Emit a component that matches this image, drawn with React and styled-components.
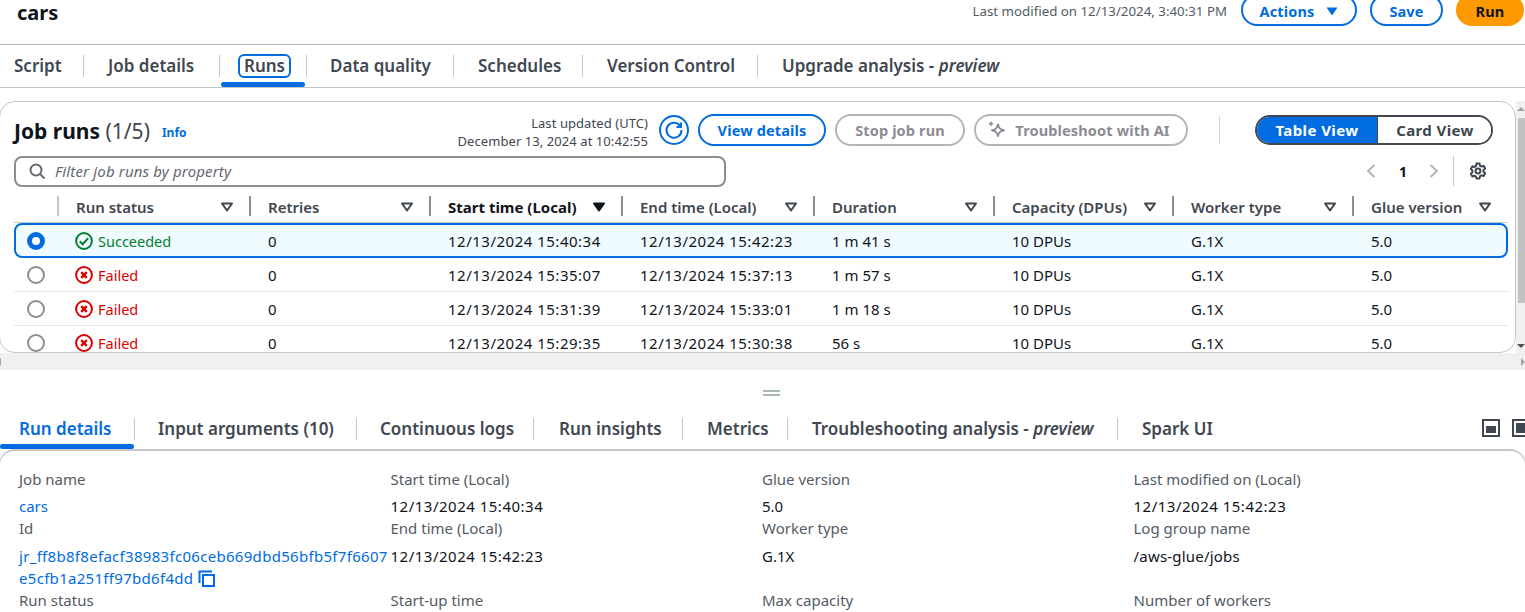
import React from 'react'
import styled, { createGlobalStyle } from 'styled-components'

const GlobalStyle = createGlobalStyle`
  html, body {
    margin: 0;
    padding: 0;
    height: 612px;
    overflow: hidden;
    background: #fff;
    font-family: "Noto Sans", "Open Sans", sans-serif;
    font-size: 14px;
    color: #0f141a;
  }
`

const BLUE = '#006ce0'
const GRID = '43px 192px 180px 192px 192px 180px 179px 180px 155px'

const Page = styled.div`
  margin-top: -6px;
  width: 1525px;
`

const Header = styled.header`
  height: 51px;
  box-sizing: border-box;
  border-bottom: 1px solid #a9b8b8;
  display: flex;
  align-items: flex-start;
  padding: 0 1px 0 17px;
`
const Title = styled.h1`
  margin: 5px 0 0;
  font-size: 20px;
  line-height: 28px;
  font-weight: 700;
  color: #0f141a;
  flex: 1;
`
const Modified = styled.span`
  font-size: 13.3px;
  line-height: 32px;
  margin-top: 1px;
  color: #545b64;
  margin-right: 14px;
`
const Button = styled.button`
  height: 32px;
  box-sizing: border-box;
  border-radius: 16px;
  border: 2px solid ${p => (p.$disabled ? '#b4b4bb' : p.$primary ? '#ff9900' : BLUE)};
  background: ${p => (p.$primary ? '#ff9900' : '#fff')};
  color: ${p => (p.$disabled ? '#8c8c94' : p.$primary ? '#0f141a' : BLUE)};
  font: 700 14.5px "Noto Sans", sans-serif;
  letter-spacing: 0.15px;
  padding: 0 ${p => p.$pr || 0}px 0 0;
  width: ${p => p.$w}px;
  margin-left: ${p => p.$ml || 0}px;
  display: inline-flex;
  align-items: center;
  justify-content: center;
  gap: ${p => p.$gap || 0}px;
  flex: none;
`
const HeaderButton = styled(Button)`
  padding-top: 2px;
`

const Tabs = styled.nav`
  height: 43px;
  box-sizing: border-box;
  display: flex;
  align-items: flex-start;
  border-bottom: 1px solid #c6c6cd;
`
const Tab = styled.div`
  position: relative;
  width: ${p => p.$w}px;
  height: 100%;
  box-sizing: border-box;
  padding: 8px 0 0 ${p => p.$pl}px;
  font-size: 17px;
  line-height: 26px;
  font-weight: 600;
  color: ${p => (p.$active ? BLUE : '#414750')};
  white-space: nowrap;
  flex: none;
  &:not(:last-of-type)::after {
    content: '';
    position: absolute;
    right: 0;
    top: 10px;
    height: 22px;
    width: 1px;
    background: #c6c6cd;
  }
  em { font-style: italic; }
`
const TabUnderline = styled.span`
  position: absolute;
  left: ${p => (p.$flush ? 0 : 1)}px;
  right: ${p => (p.$flush ? 1 : 2)}px;
  bottom: 0;
  height: 5px;
  border-radius: 3px;
  background: ${BLUE};
`
const FocusRing = styled.span`
  display: inline-block;
  border: 2px solid ${BLUE};
  border-radius: 6px;
  padding: 0 4px;
  margin-left: -6px;
  line-height: 20px;
`

const TablePanelRow = styled.div`
  display: flex;
  margin-top: 13px;
  height: 252px;
`
const Panel = styled.section`
  width: 1517px;
  margin-left: -1px;
  height: 252px;
  box-sizing: border-box;
  border: 1px solid #c6c6cd;
  border-radius: 16px;
  overflow: hidden;
  flex: none;
`
const VScroll = styled.div`
  position: relative;
  width: 9px;
  display: flex;
  flex-direction: column;
  background: #f0f0f0;
  i {
    display: block;
    height: 17px;
  }
  b {
    display: block;
    flex: 1;
    margin: 0 0 50px 2px;
    background: #c2c2c2;
  }
  &::before, &::after {
    content: '';
    position: absolute;
    right: 0;
    border-left: 4px solid transparent;
    border-right: 4px solid transparent;
  }
  &::before {
    top: 6px;
    border-bottom: 4px solid #a3a3a3;
  }
  &::after {
    bottom: 5px;
    border-top: 4px solid #505050;
  }
`
const HScroll = styled.div`
  position: relative;
  height: 17px;
  background: #f0f0f0;
  &::before, &::after {
    content: '';
    position: absolute;
    top: 5px;
    border-top: 4px solid transparent;
    border-bottom: 4px solid transparent;
  }
  &::before {
    left: -3px;
    border-right: 4px solid #a3a3a3;
  }
  &::after {
    right: 0;
    border-left: 4px solid #a3a3a3;
  }
`

const Toolbar = styled.div`
  display: flex;
  align-items: flex-start;
  padding: 12px 0 0 14px;
  height: 41px;
`
const Heading = styled.h2`
  margin: 3px 0 0;
  font-size: 21px;
  line-height: 28px;
  font-weight: 700;
  white-space: nowrap;
  span { font-weight: 400; color: #414750; }
`
const InfoLink = styled.a`
  font-size: 12px;
  font-weight: 700;
  color: ${BLUE};
  margin: 10px 0 0 12px;
`
const Updated = styled.div`
  margin-left: auto;
  text-align: right;
  font-size: 13px;
  letter-spacing: 0.07px;
  line-height: 18px;
  color: #414750;
  white-space: nowrap;
  margin-right: 11px;
`
const RoundIcon = styled.div`
  width: 30px;
  height: 30px;
  box-sizing: border-box;
  border: 2px solid ${BLUE};
  border-radius: 50%;
  display: flex;
  align-items: center;
  justify-content: center;
  margin-right: 9px;
  margin-top: 1px;
`
const ToolbarDivider = styled.div`
  width: 1px;
  height: 28px;
  background: #d5d5da;
  margin: 2px 35px 0 31px;
`
const Segmented = styled.div`
  display: flex;
  width: 238px;
  height: 30px;
  box-sizing: border-box;
  border: 2px solid #414750;
  border-radius: 15px;
  overflow: hidden;
  margin-right: 22px;
  margin-top: 1px;
`
const Segment = styled.div`
  flex: ${p => p.$w}px 0 0;
  display: flex;
  align-items: center;
  justify-content: center;
  font-weight: 700;
  font-size: 15px;
  letter-spacing: 0.4px;
  background: ${p => (p.$active ? BLUE : '#fff')};
  color: ${p => (p.$active ? '#fff' : '#414750')};
  border-right: ${p => (p.$active ? '1px solid #414750' : 'none')};
`

const FilterRow = styled.div`
  display: flex;
  align-items: center;
  height: 32px;
  padding-left: 14px;
`
const Filter = styled.div`
  width: 712px;
  height: 31px;
  box-sizing: border-box;
  border: 2px solid #8c8c94;
  border-radius: 8px;
  display: flex;
  align-items: center;
  gap: 9px;
  padding-left: 12px;
  font-style: italic;
  font-size: 15px;
  letter-spacing: 0.15px;
  color: #656871;
`
const Pager = styled.div`
  margin-left: auto;
  display: flex;
  align-items: center;
  height: 30px;
  margin-right: 28px;
`
const PageNum = styled.span`
  font-weight: 700;
  font-size: 14px;
  margin: 0 21px 0 22px;
`
const PagerDivider = styled.span`
  width: 1px;
  height: 30px;
  background: #c6c6cd;
  margin: 0 15px 0 13px;
`

const HeadRow = styled.div`
  display: grid;
  grid-template-columns: ${GRID};
  margin: 6px 7px 0 14px;
  height: 29px;
  border-bottom: 1px solid #c6c6cd;
`
const HeadCell = styled.div`
  position: relative;
  display: flex;
  align-items: center;
  justify-content: space-between;
  height: 28px;
  padding: 0 15px 0 19px;
  font-weight: ${p => (p.$sorted ? 700 : 600)};
  font-size: 15px;
  color: ${p => (p.$sorted ? '#0f141a' : '#414750')};
  white-space: nowrap;
  &::before {
    content: '';
    position: absolute;
    left: 0;
    top: 3px;
    height: 20px;
    width: 2px;
    background: ${p => (p.$first ? '#c6c6cd' : '#8c8c94')};
  }
`
const Row = styled.div`
  display: grid;
  grid-template-columns: ${GRID};
  margin: 0 7px 0 14px;
  height: ${p => (p.$selected ? 35 : 34)}px;
  box-sizing: border-box;
  align-items: center;
  border-bottom: ${p => (p.$selected ? 'none' : '1px solid #e8e8ec')};
  ${p => p.$selected && `
    background: #f0fbff;
    outline: 2px solid ${BLUE};
    outline-offset: -2px;
    border-radius: 8px;
  `}
`
const Cell = styled.div`
  padding-left: 19px;
  font-size: 15px;
  letter-spacing: ${p => (p.$date ? '0.5px' : '0')};
  white-space: nowrap;
`
const RadioCell = styled.div`
  display: flex;
  padding-left: 13px;
`
const Radio = styled.span`
  width: 18px;
  height: 18px;
  box-sizing: border-box;
  border-radius: 50%;
  border: ${p => (p.$on ? `5px solid ${BLUE}` : '2px solid #8c8c94')};
  background: #fff;
`
const Status = styled.span`
  display: flex;
  align-items: center;
  gap: 5px;
  margin-left: -1px;
  font-size: 14.5px;
  color: ${p => (p.$ok ? '#00802f' : '#db0000')};
`

const Splitter = styled.div`
  height: 40px;
  box-sizing: border-box;
  padding: 6px 0 0 18px;
  display: flex;
  justify-content: center;
  align-items: center;
  span {
    width: 17px;
    height: 2px;
    border-top: 2px solid #a9b8b8;
    border-bottom: 2px solid #a9b8b8;
  }
`
const DetailTabs = styled(Tabs)`
  position: relative;
  height: 39px;
  border-bottom: none;
  ${Tab} { padding-top: 6px; }
  ${Tab}::after { top: 8px; }
`
const PanelIcons = styled.span`
  position: absolute;
  right: -5px;
  top: 9px;
  display: flex;
  gap: 12px;
`

const Details = styled.section`
  width: 1527px;
  margin-left: -1px;
  box-sizing: border-box;
  display: grid;
  grid-template-columns: repeat(4, 371.5px);
  padding: 18px 0 0 19px;
  border: 1px solid #c6c6cd;
  border-top-width: 2px;
  border-bottom: none;
  border-radius: 16px 16px 0 0;
`
const Field = styled.div`
  height: ${p => p.$h || 49}px;
  overflow: visible;
`
const Label = styled.div`
  font-size: 15px;
  line-height: 20px;
  color: #545b64;
`
const Value = styled.div`
  font-size: 15px;
  line-height: 22px;
  margin-top: ${p => p.$mt || 6}px;
  letter-spacing: ${p => p.$ls || 0}px;
  color: ${p => (p.$link ? BLUE : '#0f141a')};
  white-space: nowrap;
  svg { vertical-align: -4px; margin-left: 5px; }
`

const Caret = ({ dark }) => (
  <svg width="14" height="10" viewBox="0 0 14 10" fill={dark ? '#0f141a' : 'none'} stroke={dark ? '#0f141a' : '#414750'} strokeWidth="2" strokeLinejoin="round">
    <path d="M2 1.5h10L7 8.5z" />
  </svg>
)
const StatusIcon = ({ ok }) => (
  <svg width="18" height="18" viewBox="0 0 18 18" fill="none" stroke={ok ? '#00802f' : '#db0000'} strokeWidth="2">
    <circle cx="9" cy="9" r="7.9" />
    {ok ? <path d="M4.8 9.3l2.9 2.9 5.4-6" /> : <path d="M6.2 6.2l5.6 5.6M11.8 6.2l-5.6 5.6" strokeWidth="2.4" />}
  </svg>
)

const COLUMNS = ['Run status', 'Retries', 'Start time (Local)', 'End time (Local)', 'Duration', 'Capacity (DPUs)', 'Worker type', 'Glue version']
const RUNS = [
  { ok: true, start: '12/13/2024 15:40:34', end: '12/13/2024 15:42:23', dur: '1 m 41 s' },
  { ok: false, start: '12/13/2024 15:35:07', end: '12/13/2024 15:37:13', dur: '1 m 57 s' },
  { ok: false, start: '12/13/2024 15:31:39', end: '12/13/2024 15:33:01', dur: '1 m 18 s' },
  { ok: false, start: '12/13/2024 15:29:35', end: '12/13/2024 15:30:38', dur: '56 s' },
]

export default function App() {
  return (
    <Page>
      <GlobalStyle />
      <Header>
        <Title>cars</Title>
        <Modified>Last modified on 12/13/2024, 3:40:31 PM</Modified>
        <HeaderButton $w={116} $gap={12}>
          Actions
          <svg width="12" height="9" viewBox="0 0 12 9" fill={BLUE}><path d="M0.5 0.5h11L6 8.5z" /></svg>
        </HeaderButton>
        <HeaderButton $w={73} $ml={13}>Save</HeaderButton>
        <HeaderButton $w={68} $ml={13} $primary>Run</HeaderButton>
      </Header>

      <Tabs>
        <Tab $w={84} $pl={14}>Script</Tab>
        <Tab $w={136} $pl={24}>Job details</Tab>
        <Tab $w={87} $pl={24}>
          <FocusRing>Runs</FocusRing>
          <TabUnderline />
        </Tab>
        <Tab $w={147} $pl={23}>Data quality</Tab>
        <Tab $w={129} $pl={24}>Schedules</Tab>
        <Tab $w={175} $pl={24}>Version Control</Tab>
        <Tab $w={260} $pl={24}>Upgrade analysis - <em>preview</em></Tab>
      </Tabs>

      <TablePanelRow>
        <Panel>
          <Toolbar>
            <Heading>Job runs <span>(1/5)</span></Heading>
            <InfoLink>Info</InfoLink>
            <Updated>
              Last updated (UTC)
              <br />
              December 13, 2024 at 10:42:55
            </Updated>
            <RoundIcon>
              <svg width="20" height="20" viewBox="0 0 20 20" fill="none" stroke={BLUE} strokeWidth="2">
                <path d="M16.5 6.5A7.5 7.5 0 1 0 17.5 10" />
                <path d="M17 2.5v4.5h-4.5" />
              </svg>
            </RoundIcon>
            <Button $w={128}>View details</Button>
            <Button $w={130} $ml={9} $disabled>Stop job run</Button>
            <Button $w={214} $ml={9} $gap={8} $pr={5} $disabled>
              <svg width="20" height="20" viewBox="0 0 20 20" fill="none" stroke="#8c8c94" strokeWidth="2" strokeLinejoin="round">
                <path d="M11 4.5c.7 3.6 2 4.9 6 5.7-4 .8-5.3 2.1-6 5.8-.7-3.7-2-5-6-5.8 4-.8 5.3-2.1 6-5.7z" />
                <path d="M4 1.5v4.5M1.8 3.7h4.4" strokeWidth="1.4" />
              </svg>
              Troubleshoot with AI
            </Button>
            <ToolbarDivider />
            <Segmented>
              <Segment $active $w={120}>Table View</Segment>
              <Segment $w={114}>Card View</Segment>
            </Segmented>
          </Toolbar>

          <FilterRow>
            <Filter>
              <svg width="18" height="18" viewBox="0 0 18 18" fill="none" stroke="#656871" strokeWidth="2">
                <circle cx="8" cy="8" r="5.5" />
                <path d="M12 12l4.5 4.5" />
              </svg>
              Filter job runs by property
            </Filter>
            <Pager>
              <svg width="12" height="16" viewBox="0 0 12 16" fill="none" stroke="#b4b4bb" strokeWidth="2"><path d="M9.5 2L3 8l6.5 6" /></svg>
              <PageNum>1</PageNum>
              <svg width="12" height="16" viewBox="0 0 12 16" fill="none" stroke="#b4b4bb" strokeWidth="2"><path d="M2.5 2L9 8l-6.5 6" /></svg>
              <PagerDivider />
              <svg width="18" height="18" viewBox="0 0 18 18" fill="none" stroke="#414750" strokeWidth="2" strokeLinejoin="round">
                <circle cx="9" cy="9" r="2.4" />
                <path d="M7.4 1.5h3.2l.4 2.2 1.5.9 2.1-.8 1.6 2.8-1.7 1.4v1.9l1.7 1.4-1.6 2.8-2.1-.8-1.5.9-.4 2.2H7.4L7 14.6l-1.5-.9-2.1.8-1.6-2.8 1.7-1.4V8.4L1.8 7l1.6-2.8 2.1.8L7 4.1z" />
              </svg>
            </Pager>
          </FilterRow>

          <HeadRow>
            <div />
            {COLUMNS.map((c, i) => (
              <HeadCell key={c} $first={i === 0} $sorted={i === 2}>
                {c}
                <Caret dark={i === 2} />
              </HeadCell>
            ))}
          </HeadRow>

          {RUNS.map((r, i) => (
            <Row key={r.start} $selected={i === 0}>
              <RadioCell><Radio $on={i === 0} /></RadioCell>
              <Cell>
                <Status $ok={r.ok}>
                  <StatusIcon ok={r.ok} />
                  {r.ok ? 'Succeeded' : 'Failed'}
                </Status>
              </Cell>
              <Cell>0</Cell>
              <Cell $date>{r.start}</Cell>
              <Cell $date>{r.end}</Cell>
              <Cell>{r.dur}</Cell>
              <Cell>10 DPUs</Cell>
              <Cell>G.1X</Cell>
              <Cell>5.0</Cell>
            </Row>
          ))}
        </Panel>
        <VScroll><i /><b /></VScroll>
      </TablePanelRow>
      <HScroll />

      <Splitter><span /></Splitter>

      <DetailTabs>
        <Tab $w={135} $pl={19} $active>Run details<TabUnderline $flush /></Tab>
        <Tab $w={222} $pl={23}>Input arguments (10)</Tab>
        <Tab $w={177} $pl={23}>Continuous logs</Tab>
        <Tab $w={149} $pl={25}>Run insights</Tab>
        <Tab $w={105} $pl={24}>Metrics</Tab>
        <Tab $w={330} $pl={24}>Troubleshooting analysis - <em>preview</em></Tab>
        <Tab $w={100} $pl={24}>Spark UI</Tab>
        <PanelIcons>
          <svg width="18" height="18" viewBox="0 0 18 18" fill="none" stroke="#414750" strokeWidth="2"><rect x="1" y="1" width="16" height="16" /><rect x="4" y="7" width="10" height="7" fill="#414750" stroke="none" /></svg>
          <svg width="18" height="18" viewBox="0 0 18 18" fill="none" stroke="#414750" strokeWidth="2"><rect x="1" y="1" width="16" height="16" /><rect x="4" y="4" width="10" height="10" fill="#414750" stroke="none" /></svg>
        </PanelIcons>
      </DetailTabs>

      <Details>
        <Field><Label>Job name</Label><Value $link>cars</Value></Field>
        <Field><Label>Start time (Local)</Label><Value $ls={0.5}>12/13/2024 15:40:34</Value></Field>
        <Field><Label>Glue version</Label><Value>5.0</Value></Field>
        <Field><Label>Last modified on (Local)</Label><Value $ls={0.5}>12/13/2024 15:42:23</Value></Field>
        <Field $h={72}>
          <Label>Id</Label>
          <Value $link $ls={0.3} $mt={7}>
            jr_ff8b8f8efacf38983fc06ceb669dbd56bfb5f7f6607
            <br />
            e5cfb1a251ff97bd6f4dd
            <svg width="18" height="18" viewBox="0 0 18 18" fill="none" stroke={BLUE} strokeWidth="2"><path d="M1.5 13V1.5H14" /><rect x="5" y="5" width="11" height="11" /></svg>
          </Value>
        </Field>
        <Field $h={72}><Label>End time (Local)</Label><Value $ls={0.5} $mt={7}>12/13/2024 15:42:23</Value></Field>
        <Field $h={72}><Label>Worker type</Label><Value $mt={7}>G.1X</Value></Field>
        <Field $h={72}><Label>Log group name</Label><Value $ls={0.2} $mt={7}>/aws-glue/jobs</Value></Field>
        <Field><Label>Run status</Label></Field>
        <Field><Label>Start-up time</Label></Field>
        <Field><Label>Max capacity</Label></Field>
        <Field><Label>Number of workers</Label></Field>
      </Details>
    </Page>
  )
}
